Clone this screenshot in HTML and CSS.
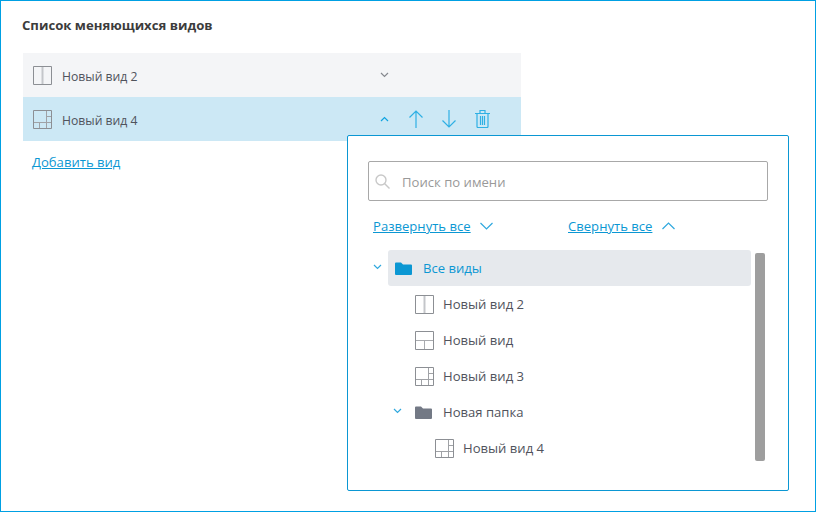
FILE: index.html
```html
<!DOCTYPE html>
<html lang="ru">
<head>
    <meta charset="UTF-8">
    <title>Список меняющихся видов</title>
    <link rel="stylesheet" href="styles.css">
</head>
<body>
    <svg class="sprite" width="0" height="0">
        <symbol id="layout-two" viewBox="0 0 19 19">
            <path d="M9.5 1v17" stroke="#c4c6ca" stroke-width="2"/>
            <path d="M.5.5h18v18H.5z" fill="none" stroke="#8c8f94"/>
        </symbol>
        <symbol id="layout-three" viewBox="0 0 19 19">
            <path d="M1 9.5h17M9.5 10v8" fill="none" stroke="#a9abaf"/>
            <path d="M.5.5h18v18H.5z" fill="none" stroke="#8c8f94"/>
        </symbol>
        <symbol id="layout-many" viewBox="0 0 19 19">
            <path d="M13.5 1v17M14 6.5h4M1 12.5h17M6.500 13v5" fill="none" stroke="#a0a2a6"/>
            <path d="M.5.5h18v18H.5z" fill="none" stroke="#8c8f94"/>
        </symbol>
        <symbol id="folder" viewBox="0 0 17 13">
            <path d="M0 1.5a1 1 0 0 1 1-1h5l2 2h8a1 1 0 0 1 1 1V12a1 1 0 0 1-1 1H1a1 1 0 0 1-1-1z" fill="currentColor"/>
        </symbol>
    </svg>

    <div class="frame">
        <h1 class="title">Список меняющихся видов</h1>

        <!-- Selected views -->
        <div class="view-list">
            <div class="view-row">
                <svg class="layout-icon"><use href="#layout-two"/></svg>
                <span class="view-name">Новый вид 2</span>
                <div class="view-actions">
                    <svg class="small-chevron grey" viewBox="0 0 9 6"><path d="M1 1l3.500 3.500L8 1"/></svg>
                </div>
            </div>
            <div class="view-row active">
                <svg class="layout-icon"><use href="#layout-many"/></svg>
                <span class="view-name">Новый вид 4</span>
                <div class="view-actions">
                    <svg class="small-chevron" viewBox="0 0 9 6"><path d="M1 5l3.500-3.500L8 5"/></svg>
                    <svg class="arrow-icon" viewBox="0 0 14 18"><path d="M7 18V1M.5 7.500L7 1l6.500 6.500"/></svg>
                    <svg class="arrow-icon" viewBox="0 0 14 18"><path d="M7 0v17M.5 10.500L7 17l6.500-6.500"/></svg>
                    <svg class="trash-icon" viewBox="0 0 15 18"><path d="M0 3.500h15M5 3.500v-3h5v3M2 3.500V16.500a1 1 0 0 0 1 1h9a1 1 0 0 0 1-1V3.500M5.500 6v9M7.500 6v9M9.500 6v9"/></svg>
                </div>
            </div>
        </div>
        <a class="link add-link" href="#">Добавить вид</a>

        <!-- View picker popup -->
        <div class="picker">
            <div class="search">
                <svg class="search-icon" viewBox="0 0 15 15"><circle cx="6" cy="6" r="5"/><path d="M9.500 9.500l5 5"/></svg>
                <span class="search-text">Поиск по имени</span>
            </div>
            <div class="tree-tools">
                <div class="tool">
                    <a class="link" href="#">Развернуть все</a>
                    <svg class="tool-chevron" viewBox="0 0 13 8"><path d="M.5 1L6.500 7l6-6"/></svg>
                </div>
                <div class="tool">
                    <a class="link" href="#">Свернуть все</a>
                    <svg class="tool-chevron" viewBox="0 0 13 8"><path d="M.5 7l6-6 6 6"/></svg>
                </div>
            </div>
            <div class="tree-wrap">
                <div class="tree">
                    <div class="tree-row root">
                        <svg class="tree-chevron" viewBox="0 0 9 6"><path d="M1 1l3.500 3.500L8 1"/></svg>
                        <div class="tree-label selected">
                            <svg class="folder-icon blue"><use href="#folder"/></svg>
                            <span>Все виды</span>
                        </div>
                    </div>
                    <div class="tree-row level1">
                        <svg class="layout-icon"><use href="#layout-two"/></svg>
                        <span>Новый вид 2</span>
                    </div>
                    <div class="tree-row level1">
                        <svg class="layout-icon"><use href="#layout-three"/></svg>
                        <span>Новый вид</span>
                    </div>
                    <div class="tree-row level1">
                        <svg class="layout-icon"><use href="#layout-many"/></svg>
                        <span>Новый вид 3</span>
                    </div>
                    <div class="tree-row folder-row">
                        <svg class="tree-chevron" viewBox="0 0 9 6"><path d="M1 1l3.500 3.500L8 1"/></svg>
                        <svg class="folder-icon"><use href="#folder"/></svg>
                        <span>Новая папка</span>
                    </div>
                    <div class="tree-row level2">
                        <svg class="layout-icon"><use href="#layout-many"/></svg>
                        <span>Новый вид 4</span>
                    </div>
                </div>
                <div class="scrollbar"></div>
            </div>
        </div>
    </div>
</body>
</html>
```

FILE: styles.css
```css
* {
    box-sizing: border-box;
    margin: 0;
    padding: 0;
}

body {
    font-family: "Open Sans", sans-serif;
    font-size: 13.1px;
    color: #50535c;
    background: #fff;
}

.sprite {
    display: block;
}

.frame {
    position: relative;
    width: 816px;
    height: 512px;
    border: 1px solid #00a0e3;
    padding: 14px 21px;
}

.title {
    font-size: 13.15px;
    font-weight: 700;
    line-height: 20px;
    color: #3c3c3c;
}

.link {
    color: #0b97d3;
    text-decoration: underline;
    line-height: 18px;
}

/* Selected views */
.view-list {
    width: 498px;
    margin: 18px 0 0 1px;
}

.view-row {
    display: flex;
    align-items: center;
    height: 44px;
    padding-left: 10px;
    background: #f4f5f7;
}

.view-row.active {
    background: #cce8f5;
}

.layout-icon {
    flex: none;
    width: 19px;
    height: 19px;
}

.view-name {
    width: 318px;
    margin: 2px 0 0 10px;
    font-size: 12.2px;
}

.view-actions {
    display: flex;
    align-items: center;
    gap: 19px;
}

.small-chevron {
    width: 9px;
    height: 6px;
    margin-right: 1px;
    fill: none;
    stroke: #0fa3e0;
    stroke-width: 1.2;
}

.small-chevron.grey {
    stroke: #85888e;
}

.arrow-icon {
    width: 14px;
    height: 18px;
    fill: none;
    stroke: #2fb0e4;
    stroke-width: 1.2;
}

.trash-icon {
    width: 15px;
    height: 18px;
    fill: none;
    stroke: #2fb0e4;
    stroke-width: 1.2;
}

.add-link {
    display: inline-block;
    margin: 12px 0 0 10px;
}

/* Picker popup */
.picker {
    position: absolute;
    left: 346px;
    top: 134px;
    width: 442px;
    height: 356px;
    background: #fff;
    border: 1px solid #0b97d3;
    border-radius: 2px;
    padding: 25px 20px 0;
}

.search {
    display: flex;
    align-items: center;
    height: 40px;
    border: 1px solid #a8a8a8;
    border-radius: 2px;
    padding-left: 6px;
}

.search-icon {
    width: 15px;
    height: 15px;
    fill: none;
    stroke: #c8c8c8;
    stroke-width: 1.4;
}

.search-text {
    margin: 2px 0 0 12px;
    color: #999;
}

.tree-tools {
    display: flex;
    margin: 16px 0 0 5px;
}

.tool {
    display: flex;
    align-items: center;
    gap: 9.5px;
    width: 195px;
}

.tool-chevron {
    width: 13px;
    height: 8px;
    fill: none;
    stroke: #2fa8de;
    stroke-width: 1.2;
}

.tree-wrap {
    display: flex;
    margin-top: 15px;
}

.tree {
    width: 383px;
}

.tree-row {
    display: flex;
    align-items: center;
    height: 36px;
}

.tree-chevron {
    flex: none;
    width: 9px;
    height: 6px;
    margin-bottom: 2px;
    fill: none;
    stroke: #2fa8de;
    stroke-width: 1.2;
}

.root {
    padding-left: 5px;
}

.tree-label {
    display: flex;
    align-items: center;
    flex: 1;
    height: 36px;
    margin-left: 6px;
    padding-left: 7px;
    background: #e6e9ed;
    border-radius: 3px;
}

.tree-label.selected {
    color: #0b97d3;
}

.folder-icon {
    flex: none;
    width: 17px;
    height: 13px;
    margin-right: 11px;
    color: #737985;
}

.folder-icon.blue {
    color: #0b97d3;
}

.level1 {
    padding-left: 47px;
}

.level1 .layout-icon,
.level2 .layout-icon {
    margin-right: 9px;
}

.folder-row {
    padding-left: 25px;
}

.folder-row .tree-chevron {
    margin-right: 13px;
}

.level2 {
    padding-left: 67px;
}

.scrollbar {
    width: 10px;
    height: 208px;
    margin: 3px 0 0 4px;
    background: #9e9e9e;
    border-radius: 2px;
}
```
